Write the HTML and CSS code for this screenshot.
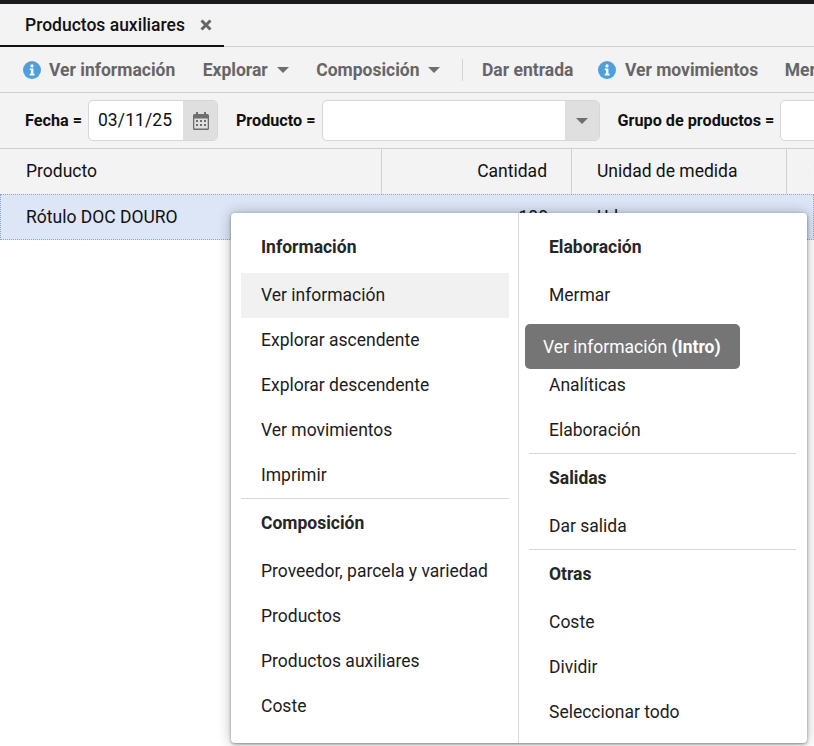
FILE: index.html
```html
<!DOCTYPE html>
<html lang="es">
<head>
<meta charset="utf-8">
<title>Productos auxiliares</title>
<link rel="stylesheet" href="styles.css">
</head>
<body>
<div class="app">
  <div class="topbar"></div>
  <div class="tabs">
    <div class="tab"><span>Productos auxiliares</span>
      <svg class="tab-close" viewBox="0 0 12 12"><path d="M1.500 1.500l9 9M10.500 1.500l-9 9" stroke="#666" stroke-width="3" fill="none"/></svg>
    </div>
  </div>
  <div class="toolbar">
    <div class="tool">
      <svg class="info" viewBox="0 0 18 18"><circle cx="9" cy="9" r="9" fill="#4f9fdc"/><circle cx="9" cy="4.900" r="1.600" fill="#fff"/><path d="M6.800 7.400h3.600v5.400h1.100v1.600H6.700v-1.600h1.200V9H6.800z" fill="#fff"/></svg>
      <span>Ver información</span>
    </div>
    <div class="tool"><span>Explorar</span><i class="caret"></i></div>
    <div class="tool"><span>Composición</span><i class="caret"></i></div>
    <div class="tool-sep"></div>
    <div class="tool"><span>Dar entrada</span></div>
    <div class="tool tool-tight">
      <svg class="info" viewBox="0 0 18 18"><circle cx="9" cy="9" r="9" fill="#4f9fdc"/><circle cx="9" cy="4.900" r="1.600" fill="#fff"/><path d="M6.800 7.400h3.600v5.400h1.100v1.600H6.700v-1.600h1.200V9H6.800z" fill="#fff"/></svg>
      <span>Ver movimientos</span>
    </div>
    <div class="tool tool-last"><span>Mermar</span></div>
  </div>
  <div class="filters">
    <label class="f-label">Fecha =</label>
    <div class="field field-date">
      <div class="field-input">03/11/25</div>
      <div class="field-btn">
        <svg class="cal" viewBox="0 0 16 18"><path fill-rule="evenodd" fill="#6e6e6e" d="M3 0h2v2h6V0h2v2h1.500A1.500 1.500 0 0 1 16 3.500v13a1.500 1.500 0 0 1-1.500 1.500h-13A1.500 1.500 0 0 1 0 16.500v-13A1.500 1.500 0 0 1 1.500 2H3zM1.300 6.500v10h13.400v-10z"/><path fill="#6e6e6e" d="M3 8h2v2H3zM7 8h2v2H7zM11 8h2v2h-2zM3 12h2v2H3zM7 12h2v2H7zM11 12h2v2h-2z"/></svg>
      </div>
    </div>
    <label class="f-label f-label-gap">Producto =</label>
    <div class="field field-product">
      <div class="field-input"></div>
      <div class="field-btn field-btn-wide"><i class="caret"></i></div>
    </div>
    <label class="f-label f-label-gap">Grupo de productos =</label>
    <div class="field field-group"><div class="field-input"></div></div>
  </div>
  <div class="thead">
    <div class="cell c-prod">Producto</div>
    <div class="cell c-qty">Cantidad</div>
    <div class="cell c-unit">Unidad de medida</div>
    <div class="cell c-next">Lote</div>
  </div>
  <div class="trow">
    <div class="cell c-prod">Rótulo DOC DOURO</div>
    <div class="cell c-qty">100</div>
    <div class="cell c-unit">Ud</div>
  </div>
</div>

<div class="menu">
  <div class="menu-col menu-col-left">
    <div class="m-head m-head-first">Información</div>
    <div class="m-item m-active">Ver información</div>
    <div class="m-item">Explorar ascendente</div>
    <div class="m-item">Explorar descendente</div>
    <div class="m-item">Ver movimientos</div>
    <div class="m-item">Imprimir</div>
    <div class="m-sep"></div>
    <div class="m-head">Composición</div>
    <div class="m-item">Proveedor, parcela y variedad</div>
    <div class="m-item">Productos</div>
    <div class="m-item">Productos auxiliares</div>
    <div class="m-item">Coste</div>
  </div>
  <div class="menu-col menu-col-right">
    <div class="m-head m-head-first">Elaboración</div>
    <div class="m-item">Mermar</div>
    <div class="m-item m-hidden">Consumir</div>
    <div class="m-item">Analíticas</div>
    <div class="m-item">Elaboración</div>
    <div class="m-sep"></div>
    <div class="m-head">Salidas</div>
    <div class="m-item">Dar salida</div>
    <div class="m-sep"></div>
    <div class="m-head">Otras</div>
    <div class="m-item">Coste</div>
    <div class="m-item">Dividir</div>
    <div class="m-item">Seleccionar todo</div>
  </div>
</div>
<div class="tooltip">Ver información <b>(Intro)</b></div>
</body>
</html>
```

FILE: styles.css
```css
* { box-sizing: border-box; }
html, body { margin: 0; height: 100%; }
body {
  font-family: Roboto, "Liberation Sans", sans-serif;
  font-size: 17.500px;
  color: #111;
  background: #fff;
  overflow: hidden;
  position: relative;
}
.app { width: 100%; height: 746px; overflow: hidden; }
.topbar { height: 4px; background: #1a1a1c; }
.tabs {
  height: 43px;
  background: #f3f3f3;
  border-bottom: 1px solid #cfcfcf;
  display: flex;
}
.tab {
  width: 224px;
  height: 43px;
  padding-left: 25px;
  border-bottom: 2px solid #111;
  display: flex;
  align-items: center;
  gap: 15px;
  font-weight: 500;
}
.tab-close { width: 12px; height: 12px; flex: none; }
.toolbar {
  height: 46px;
  background: #f3f3f3;
  border-bottom: 1px solid #cfcfcf;
  display: flex;
  align-items: center;
  padding-left: 22.500px;
  gap: 27.500px;
  color: #666;
  font-weight: 700;
  white-space: nowrap;
}
.tool { display: flex; flex: none; align-items: center; gap: 8.500px; }
.tool-tight { margin-left: -2.500px; }
.tool-last { margin-left: -1px; }
.info { width: 18px; height: 18px; flex: none; }
.caret {
  display: inline-block;
  width: 12px; height: 6px;
  margin-left: .5px;
  border-left: 6px solid transparent;
  border-right: 6px solid transparent;
  border-top: 6px solid #6e6e6e;
}
.tool-sep { flex: none; width: 1px; height: 22px; background: #d4d4d4; margin: 0 -8.500px 0 -6px; }
.filters {
  height: 56px;
  background: #f3f3f3;
  border-bottom: 1px solid #cfcfcf;
  display: flex;
  align-items: center;
  padding-left: 25px;
  white-space: nowrap;
}
.f-label { font-weight: 700; font-size: 16.200px; margin-right: 6px; }
.f-label-gap { margin-left: 18px; }
.field {
  height: 41px;
  display: flex;
  flex: none;
  border: 1px solid #d6d6d6;
  border-radius: 5px;
  background: #fff;
  overflow: hidden;
}
.field-input { flex: 1; padding-left: 9px; line-height: 39px; letter-spacing: .1px; }
.field-btn {
  width: 34px;
  background: #dfdfe0;
  display: flex;
  align-items: center;
  justify-content: center;
}
.field-btn .caret { margin-left: 1px; }
.field-date { width: 130px; }
.field-product { width: 278px; }
.field-group { width: 120px; }
.cal { width: 16px; height: 18px; margin-left: 2px; }
.thead {
  height: 45px;
  background: #f3f3f3;
  display: flex;
  align-items: center;
  white-space: nowrap;
}
.thead .cell { height: 100%; line-height: 44px; border-right: 1px solid #cfcfcf; }
.thead .c-next { border-right: 0; }
.cell { flex: none; }
.c-prod { width: 382px; padding-left: 26px; }
.c-qty { width: 190px; text-align: right; padding-right: 24px; }
.c-unit { width: 215px; padding-left: 25px; }
.c-next { padding-left: 26px; }
.trow {
  height: 46px;
  background: #dce6f6;
  border: 1px dotted #8fa6cf;
  display: flex;
  line-height: 44px;
}
.trow .c-prod { width: 381px; padding-left: 25px; }
.menu {
  position: absolute;
  left: 231px;
  top: 213px;
  width: 576px;
  height: 530px;
  background: #fff;
  border-radius: 4px;
  box-shadow: 0 1px 3px rgba(0,0,0,.4), 0 0 14px rgba(0,0,0,.28);
  display: flex;
  color: #1c1c1c;
}
.menu-col { flex: 1; padding: 10px; }
.menu-col-left { flex: none; width: 288px; border-right: 1px solid #d8d8d8; padding-right: 9px; }
.menu-col-right { padding-right: 11px; }
.m-item, .m-head {
  height: 45px;
  line-height: 45px;
  padding-left: 20px;
  white-space: nowrap;
}
.m-head { font-weight: 700; color: #262626; margin-top: 2px; margin-bottom: 3px; }
.m-active { background: #f1f1f1; }
.m-hidden { visibility: hidden; }
.m-sep { height: 1px; background: #d8d8d8; }
.tooltip {
  position: absolute;
  left: 525px;
  top: 324px;
  width: 215px;
  height: 45px;
  line-height: 46px;
  padding-left: 18px;
  background: #757575;
  color: #fff;
  border-radius: 5px;
  white-space: nowrap;
}
```
